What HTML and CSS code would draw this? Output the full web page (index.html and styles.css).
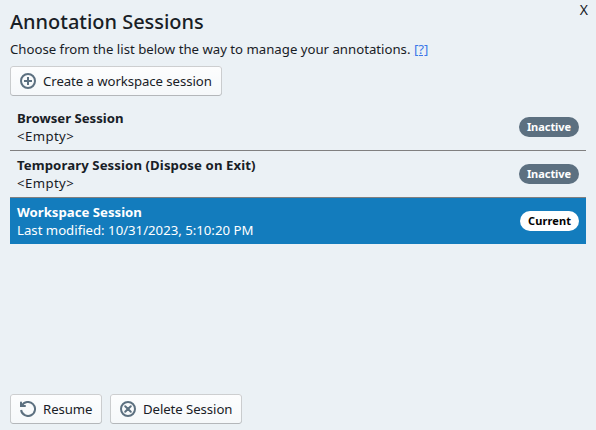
FILE: index.html
```html
<!DOCTYPE html>
<html lang="en">
<head>
<meta charset="utf-8">
<title>Annotation Sessions</title>
<link rel="stylesheet" href="styles.css">
</head>
<body>
<main class="dialog">
  <button class="close" aria-label="Close">X</button>
  <h1>Annotation Sessions</h1>
  <p class="intro">Choose from the list below the way to manage your annotations. <a href="#">[?]</a></p>
  <button class="btn create">
    <svg viewBox="0 0 16 16"><circle cx="8" cy="8" r="7"/><path d="M8 4v8M4 8h8"/></svg>
    <span>Create a workspace session</span>
  </button>
  <ul class="sessions">
    <li class="row"><div><strong>Browser Session</strong><span class="empty">&lt;Empty&gt;</span></div><em class="badge">Inactive</em></li>
    <li class="row"><div><strong class="long">Temporary Session (Dispose on Exit)</strong><span class="empty">&lt;Empty&gt;</span></div><em class="badge">Inactive</em></li>
    <li class="row current"><div><strong>Workspace Session</strong><span>Last modified: 10/31/2023, 5:10:20 PM</span></div><em class="badge">Current</em></li>
  </ul>
  <footer class="actions">
    <button class="btn resume">
      <svg viewBox="0 0 16 16"><path stroke-linecap="round" d="M1 1.5V5h4"/><path d="M1.8 4.8A7 7 0 1 1 1.1 9"/></svg>
      <span>Resume</span>
    </button>
    <button class="btn delete">
      <svg viewBox="0 0 16 16"><circle cx="8" cy="8" r="7"/><path stroke-linecap="round" d="M5.2 5.2l5.6 5.6M10.8 5.2l-5.6 5.6"/></svg>
      <span>Delete Session</span>
    </button>
  </footer>
</main>
</body>
</html>
```
FILE: styles.css
```css
* { box-sizing: border-box; }
body {
  margin: 0;
  background: #ebf1f5;
  color: #182026;
  font: 13.2px/18px "Noto Sans", sans-serif;
}
.dialog {
  position: relative;
  display: flex;
  flex-direction: column;
  align-items: flex-start;
  height: 430px;
  padding: 8px 10px 6px;
}
.close {
  position: absolute;
  top: 1px;
  right: 8px;
  padding: 0;
  border: 0;
  background: none;
  color: inherit;
  font-family: inherit;
  font-size: 14px;
  line-height: 18px;
}
h1 {
  margin: 0;
  font-size: 19.95px;
  line-height: 28px;
  font-weight: 500;
}
.intro { margin: 4px 0 8px; }
.intro a { color: #3c78e8; }
.btn {
  display: flex;
  align-items: center;
  gap: 7px;
  height: 30px;
  padding: 0 10px;
  border: 0;
  border-radius: 3px;
  background: #f5f8fa linear-gradient(180deg, rgba(255, 255, 255, .8), rgba(255, 255, 255, 0));
  box-shadow: inset 0 0 0 1px rgba(16, 22, 26, .2), inset 0 -1px 0 rgba(16, 22, 26, .1);
  color: #182026;
  font: inherit;
  letter-spacing: -.07px;
  white-space: nowrap;
}
.btn svg {
  flex: none;
  width: 16px;
  height: 16px;
  fill: none;
  stroke: #5c7080;
  stroke-width: 2;
}
.create { width: 212px; }
.resume { width: 92px; }
.delete { width: 132px; }
.sessions {
  width: 100%;
  margin: 8px 0 0;
  padding: 0;
  list-style: none;
}
.row {
  display: flex;
  align-items: center;
  justify-content: space-between;
  height: 47px;
  padding: 0 7px;
  border-bottom: 1px solid #808080;
}
.row strong, .row span { display: block; }
.row strong { font-weight: 700; }
.row .long { letter-spacing: .09px; }
.row .empty { letter-spacing: .4px; }
.row.current {
  height: 46px;
  border: 0;
  background: #137cbd;
  color: #fff;
}
.badge {
  width: 60px;
  border-radius: 10px;
  background: #5c7080;
  color: #fff;
  font: bold 11px/20px "Noto Sans", sans-serif;
  letter-spacing: -.05px;
  text-align: center;
}
.current .badge {
  width: 59px;
  background: #fff;
  color: #000;
  letter-spacing: .1px;
}
.actions { display: flex; gap: 8px; margin-top: auto; }
```
